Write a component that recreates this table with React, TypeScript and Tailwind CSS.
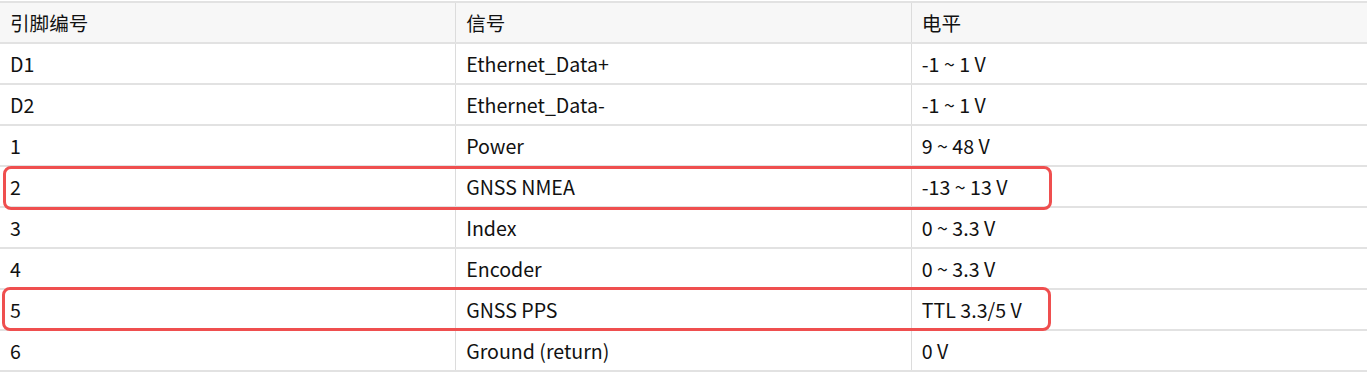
const rows: [string, string, string][] = [
  ['D1', 'Ethernet_Data+', '-1 ~ 1 V'],
  ['D2', 'Ethernet_Data-', '-1 ~ 1 V'],
  ['1', 'Power', '9 ~ 48 V'],
  ['2', 'GNSS NMEA', '-13 ~ 13 V'],
  ['3', 'Index', '0 ~ 3.3 V'],
  ['4', 'Encoder', '0 ~ 3.3 V'],
  ['5', 'GNSS PPS', 'TTL 3.3/5 V'],
  ['6', 'Ground (return)', '0 V'],
];

export default function App() {
  return (
    <div className="bg-white w-[1367px] h-[372px] overflow-hidden pt-px font-['Noto_Sans_CJK_SC','Noto_Sans',sans-serif] text-[19.6px] text-[#111]">
      <div className="relative">
        <table className="w-full table-fixed border-collapse">
          <thead>
            <tr className="h-[41px] bg-[#f7f7f7] border-t-2 border-b-2 border-[#e2e2e2]">
              <th className="px-[10px] text-left font-normal">引脚编号</th>
              <th className="px-[10px] text-left font-normal border-l border-[#dcdcdc]">信号</th>
              <th className="px-[10px] text-left font-normal border-l border-[#dcdcdc]">电平</th>
            </tr>
          </thead>
          <tbody>
            {rows.map(([pin, sig, lvl]) => (
              <tr key={pin} className="h-[41px] border-b-2 border-[#e2e2e2]">
                <td className="px-[10px]">{pin}</td>
                <td className="px-[10px] border-l border-[#dcdcdc]">{sig}</td>
                <td className="px-[10px] border-l border-[#dcdcdc]">{lvl}</td>
              </tr>
            ))}
          </tbody>
        </table>
        <div className="absolute left-[3px] top-[165px] w-[1049px] h-[44px] rounded-[8px] border-[3px] border-[#ef4f4f]" />
        <div className="absolute left-[2px] top-[286px] w-[1049px] h-[44px] rounded-[8px] border-[3px] border-[#ef4f4f]" />
      </div>
    </div>
  );
}
